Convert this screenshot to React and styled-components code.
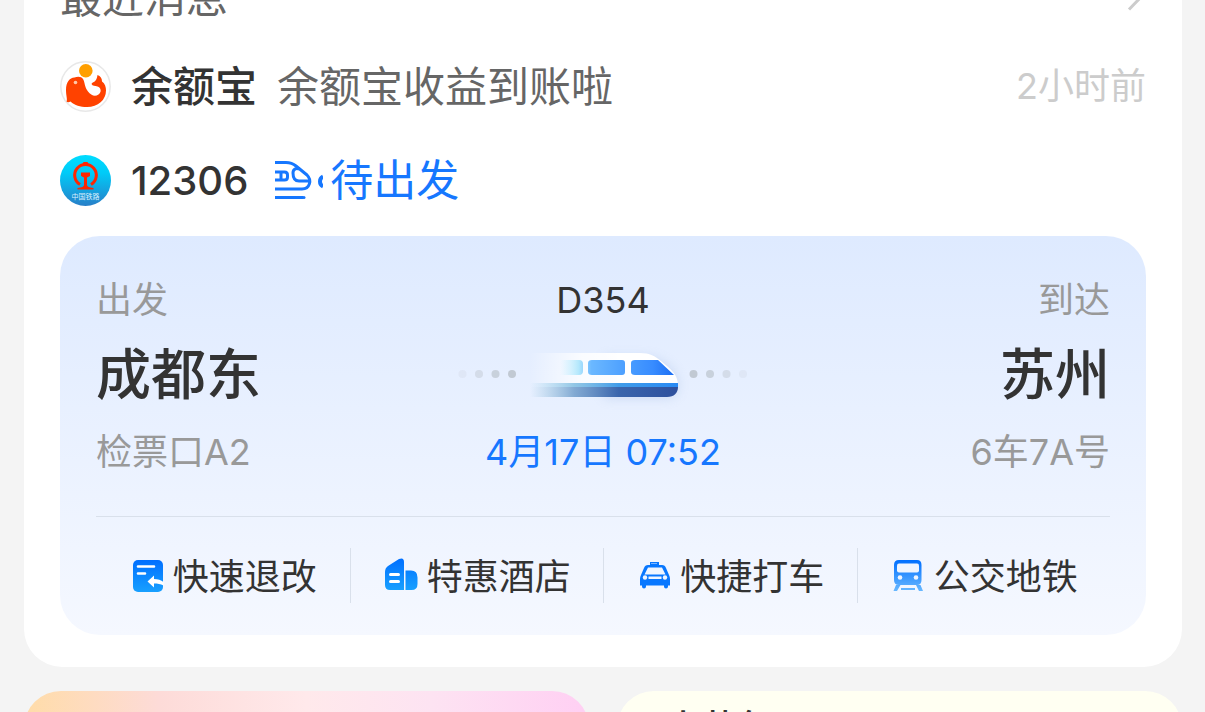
import React from "react";
import styled, { createGlobalStyle } from "styled-components";

const GlobalStyle = createGlobalStyle`
  * { box-sizing: border-box; }
  html, body { margin: 0; }
  body {
    height: 100vh;
    overflow: hidden;
    background: #f4f4f4;
    color: #333;
    font-family: Inter, "Noto Sans CJK SC", sans-serif;
  }
  button {
    border: 0;
    padding: 0;
    background: none;
    color: inherit;
    font: inherit;
    cursor: pointer;
  }
  h2, h3, p { margin: 0; font-weight: 400; }
`;

const Page = styled.main`
  padding: 0 23px 0 24px;
`;

const MessageCard = styled.section`
  padding: 0 36px 32px;
  background: #fff;
  border-radius: 0 0 38px 38px;
`;

const CardHeader = styled.header`
  display: flex;
  align-items: center;
  justify-content: space-between;
  height: 60px;
  margin-top: -32px;
  color: #666;
`;

const CardTitle = styled.h2`
  font-size: 42px;
  line-height: 60px;
`;

const MoreLink = styled.a`
  display: flex;
`;

const MessageRow = styled.div`
  display: flex;
  align-items: center;
  height: 61px;
  margin-top: ${(p) => p.$gap}px;
  font-size: 42px;
  line-height: 61px;
  white-space: nowrap;
`;

const Sender = styled.h3`
  margin: 0 20px;
  font-size: ${(p) => p.$size || 42}px;
  font-weight: 500;
`;

const Summary = styled.p`
  color: #666;
`;

const Time = styled.time`
  margin-left: auto;
  color: #ccc;
  font-size: 36px;
`;

const Status = styled.p`
  display: flex;
  align-items: center;
  gap: 7px;
  margin-left: 7px;
  color: #1677ff;
  font-size: 43px;
`;

const TripCard = styled.article`
  margin-top: 25px;
  padding: 37px 36px 32px;
  border-radius: 40px;
  background: linear-gradient(#deeaff, #f5f8ff);
`;

const TripGrid = styled.div`
  display: grid;
  grid-template-columns: 1fr auto 1fr;
  grid-template-rows: 54px 94px 62px;
  align-items: center;
  padding-bottom: 33px;
  border-bottom: 1px solid #d9e0eb;
  white-space: nowrap;
`;

const Cell = styled.p`
  text-align: ${(p) => p.$align || "left"};
  color: ${(p) => p.$color || "#999"};
  font-size: 36px;
  line-height: 54px;
`;

const Station = styled(Cell)`
  color: #333;
  font-size: 55px;
  line-height: 80px;
  font-weight: 500;
`;

const Actions = styled.nav`
  display: grid;
  grid-template-columns: repeat(4, 1fr);
  margin-top: 31px;
`;

const Action = styled.button`
  display: flex;
  align-items: center;
  justify-content: center;
  gap: 8px;
  height: 55px;
  font-size: 36px;
  white-space: nowrap;

  & + & { border-left: 1px solid #d9e0eb; }
`;

const ActionLabel = styled.span`
  padding-bottom: 4px;
`;

const Feeds = styled.div`
  display: grid;
  grid-template-columns: 1fr 1fr;
  gap: 28px;
  margin-top: 24px;
`;

const Feed = styled.section`
  padding: 10px 48px;
  border-radius: 38px;
  background: ${(p) => p.$background};
`;

const FeedTitle = styled.h2`
  font-size: 36px;
  line-height: 54px;
  font-weight: 500;
`;

const WhaleLogo = () => (
  <svg width="51" height="51" viewBox="0 0 51 51" aria-hidden="true">
    <circle cx="25.500" cy="25.500" r="24.700" fill="#fff" stroke="#e8e8e8" strokeWidth="1.500" />
    <circle cx="25.800" cy="9.800" r="6.800" fill="#ff9f00" />
    <path d="M6 29C6 21 9.500 17 14.500 16.500C18 15 21.500 15.500 23 18C25 21.500 24.500 26 28 30.500C31 34.500 35 36 38.500 33.500C42 31 41 26.500 37.500 25.500C35 24.800 32.500 25 31.500 23C33 20 36.500 22 37.500 14C40.500 15 42 17.500 42 20.500C45 22.500 46 26 46 29.500C46 39 38 46 27 46C20 46 15 44.500 10.500 40.500C9 41.500 7.500 41.500 6.500 40.500C7.500 38 6 35 6 29Z" fill="#ff4200" />
    <circle cx="15.500" cy="21.500" r="1.800" fill="#ffc7a8" />
  </svg>
);

const RailwayLogo = () => (
  <svg width="51" height="51" viewBox="0 0 51 51" aria-hidden="true">
    <defs>
      <linearGradient id="rail" x2="0" y2="1">
        <stop stopColor="#00dcff" />
        <stop offset=".35" stopColor="#00cbf8" />
        <stop offset="1" stopColor="#287fc8" />
      </linearGradient>
    </defs>
    <circle cx="25.500" cy="25.500" r="25.500" fill="url(#rail)" />
    <path d="M20 29.500A10.800 10.800 0 1 1 31 29.500" fill="none" stroke="#ff2600" strokeWidth="3" />
    <path d="M22.500 9l1-2h4l1 2ZM21 17.500h9v3.500l-3 1.500v7.500c0 1.500 2 2.500 6.500 3v1.500H17.500V33c4.500-.5 6.500-1.500 6.500-3v-7.500l-3-1.500Z" fill="#ff2600" />
    <text x="25.500" y="43.500" textAnchor="middle" fill="#d9f0ff" fontSize="7" fontFamily="Noto Sans CJK SC, sans-serif">中国铁路</text>
  </svg>
);

const TrainStatusIcon = () => (
  <svg width="48" height="40" viewBox="0 1 48 40" fill="none" stroke="#1677ff" strokeWidth="3" strokeLinejoin="round" aria-hidden="true">
    <path d="M0 2.500h11c4 0 7 1 10 3.500l11 9c5 5 3 14-5 14H0M0 37.500h28.500" />
    <path d="M0 12h9.500c2 0 3 1 3 3v2c0 2-1 3-3 3H0M6 12v8" />
    <path d="M24 9c-3-1-6 0-6 4 0 5 2 8 6 8h10" />
    <circle cx="29" cy="37.500" r="1.500" fill="#1677ff" stroke="none" />
    <path d="M48 16.500c-4 2-4 8 0 10" strokeWidth="4" />
  </svg>
);

const TrainPicture = () => (
  <svg width="294" height="72" viewBox="2 1 294 72" aria-hidden="true">
    <defs>
      <linearGradient id="body">
        <stop offset="0" stopColor="#fff" stopOpacity="0" />
        <stop offset=".35" stopColor="#fff" stopOpacity=".8" />
        <stop offset=".6" stopColor="#fff" />
      </linearGradient>
      <linearGradient id="windows" gradientUnits="userSpaceOnUse" x1="106" x2="222">
        <stop offset="0" stopColor="#c8f0ff" stopOpacity="0" />
        <stop offset=".16" stopColor="#b4e8fc" />
        <stop offset=".27" stopColor="#6bb8ff" />
        <stop offset=".6" stopColor="#489cff" />
        <stop offset=".8" stopColor="#388cff" />
        <stop offset="1" stopColor="#196bf2" />
      </linearGradient>
      <linearGradient id="stripe">
        <stop offset="0" stopColor="#82c4e4" stopOpacity="0" />
        <stop offset=".3" stopColor="#78b9df" stopOpacity=".8" />
        <stop offset=".6" stopColor="#409ce9" />
        <stop offset="1" stopColor="#298af4" />
      </linearGradient>
      <linearGradient id="base">
        <stop offset="0" stopColor="#83bbd6" stopOpacity="0" />
        <stop offset=".3" stopColor="#709dcb" stopOpacity=".85" />
        <stop offset=".6" stopColor="#3a65ac" />
        <stop offset="1" stopColor="#2e509d" />
      </linearGradient>
      <filter id="shade" x="-20%" y="-40%" width="140%" height="190%">
        <feGaussianBlur stdDeviation="6" />
      </filter>
    </defs>
    <g fill="#c1c9d3">
      <circle cx="8.500" cy="37" r="4" opacity=".2" />
      <circle cx="25" cy="37" r="4" opacity=".5" />
      <circle cx="41.500" cy="37" r="4" opacity=".8" />
      <circle cx="58" cy="37" r="4" />
      <circle cx="239.500" cy="37" r="4" />
      <circle cx="256" cy="37" r="4" opacity=".8" />
      <circle cx="272.500" cy="37" r="4" opacity=".5" />
      <circle cx="289" cy="37" r="4" opacity=".2" />
    </g>
    <path d="M150 20h39c20 0 35 14 35 28 0 9-4 13-12 13h-62Z" fill="#8aa6d8" opacity=".3" filter="url(#shade)" />
    <path d="M76 16h110c10 0 15 3 21 8 10 8 17 14 17 24v2H76Z" fill="url(#body)" />
    <path d="M106 23h19q4 0 4 4v7q0 4-4 4h-19ZM138 23h30q3 0 3 3v9q0 3-3 3h-30q-4 0-4-3v-9q0-3 4-3ZM181 23h23l16 15h-39q-4 0-4-3v-9q0-3 4-3Z" fill="url(#windows)" />
    <path d="M76 46h148v4H76Z" fill="url(#stripe)" />
    <path d="M76 50h148c0 6-4 10-11 10H76Z" fill="url(#base)" />
  </svg>
);

const BlueGradient = ({ id, to = "#18a0ff" }) => (
  <defs>
    <linearGradient id={id} x2="0" y2="1">
      <stop stopColor="#006fff" />
      <stop offset="1" stopColor={to} />
    </linearGradient>
  </defs>
);

const RefundIcon = () => (
  <svg width="36" height="36" viewBox="0 0 36 36" aria-hidden="true">
    <BlueGradient id="refund" />
    <rect x="4" y="2" width="30" height="32" rx="5" fill="url(#refund)" />
    <path d="M9 8.500h16M9 15.500h7" stroke="#fff" strokeWidth="2.600" strokeLinecap="round" />
    <path d="M18.500 23.500l6.500-6v3.500c4 0 7 1 9.500 3v3.500c-3-1.500-6-2-9.500-2v4Z" fill="#fff" />
  </svg>
);

const HotelIcon = () => (
  <svg width="36" height="36" viewBox="0 0 36 36" aria-hidden="true">
    <BlueGradient id="hotel" />
    <path d="M2 14q0-4 3-6L16 1q5-2 5 3v28H7q-5 0-5-5ZM22.500 12.500H28q6.500 0 6.500 7v6.500q0 6-6 6h-6Z" fill="url(#hotel)" />
    <path d="M7.500 16.500h8M7.500 23.500h8" stroke="#fff" strokeWidth="3" strokeLinecap="round" />
  </svg>
);

const TaxiIcon = () => (
  <svg width="36" height="36" viewBox="0 0 36 36" aria-hidden="true">
    <path d="M14 4h9v3h3q3 0 4 3l3 7q1 2 1 4v6.500h-2v1q0 2-2 2t-2-2v-1H10v1q0 2-2 2t-2-2v-1H4V21q0-2 1-4l3-7q1-3 4-3h2Z" fill="#0877ff" />
    <path d="M12 9.500h14l3.500 7H8.500ZM12.500 18.500h13v2.500h-13Z" fill="#eff5ff" />
    <circle cx="9" cy="19.500" r="2.200" fill="#eff5ff" />
    <circle cx="29" cy="19.500" r="2.200" fill="#eff5ff" />
    <path d="M15.500 5.500h6" stroke="#eff5ff" strokeDasharray="1 1" />
  </svg>
);

const MetroIcon = () => (
  <svg width="36" height="36" viewBox="0 0 36 36" aria-hidden="true">
    <BlueGradient id="metro" to="#68b8ff" />
    <path d="M9 2h18q4.500 0 4.500 5v15q0 5-4.500 5H9q-5 0-5-5V7q0-5 5-5ZM6 27h4.500L7 33H3.500ZM26 27h4.500l2.500 6h-4ZM11 30h14v2H11Z" fill="url(#metro)" />
    <rect x="7" y="5.500" width="22" height="9" rx="2" fill="#eff5ff" />
    <circle cx="10" cy="19.500" r="2.300" fill="#eff5ff" />
    <circle cx="26" cy="19.500" r="2.300" fill="#eff5ff" />
  </svg>
);

const actions = [
  { label: "快速退改", Icon: RefundIcon },
  { label: "特惠酒店", Icon: HotelIcon },
  { label: "快捷打车", Icon: TaxiIcon },
  { label: "公交地铁", Icon: MetroIcon },
];

export default function App() {
  return (
    <>
      <GlobalStyle />
      <Page>
        <MessageCard>
          <CardHeader>
            <CardTitle>最近消息</CardTitle>
            <MoreLink href="#messages" aria-label="最近消息">
              <svg width="20" height="36" viewBox="0 0 20 36" fill="none" stroke="#ccc" strokeWidth="3" aria-hidden="true">
                <path d="M3 1l14 14L3 29.500" />
              </svg>
            </MoreLink>
          </CardHeader>
          <MessageRow $gap={28}>
            <WhaleLogo />
            <Sender>余额宝</Sender>
            <Summary>余额宝收益到账啦</Summary>
            <Time>2小时前</Time>
          </MessageRow>
          <MessageRow $gap={33}>
            <RailwayLogo />
            <Sender $size={40}>12306</Sender>
            <Status>
              <TrainStatusIcon />
              待出发
            </Status>
          </MessageRow>
          <TripCard>
            <TripGrid>
              <Cell>出发</Cell>
              <Cell $align="center" $color="#333">D354</Cell>
              <Cell $align="right">到达</Cell>
              <Station>成都东</Station>
              <TrainPicture />
              <Station $align="right">苏州</Station>
              <Cell>检票口A2</Cell>
              <Cell $align="center" $color="#1677ff">4月17日 07:52</Cell>
              <Cell $align="right">6车7A号</Cell>
            </TripGrid>
            <Actions>
              {actions.map(({ label, Icon }) => (
                <Action key={label}>
                  <Icon />
                  <ActionLabel>{label}</ActionLabel>
                </Action>
              ))}
            </Actions>
          </TripCard>
        </MessageCard>
        <Feeds>
          <Feed $background="linear-gradient(90deg, #ffdca8, #fddbd8 24%, #ffe9eb 50%, #fde3f2 72%, #ffcff3)" />
          <Feed $background="#fffff2">
            <FeedTitle>小荷包</FeedTitle>
          </Feed>
        </Feeds>
      </Page>
    </>
  );
}
